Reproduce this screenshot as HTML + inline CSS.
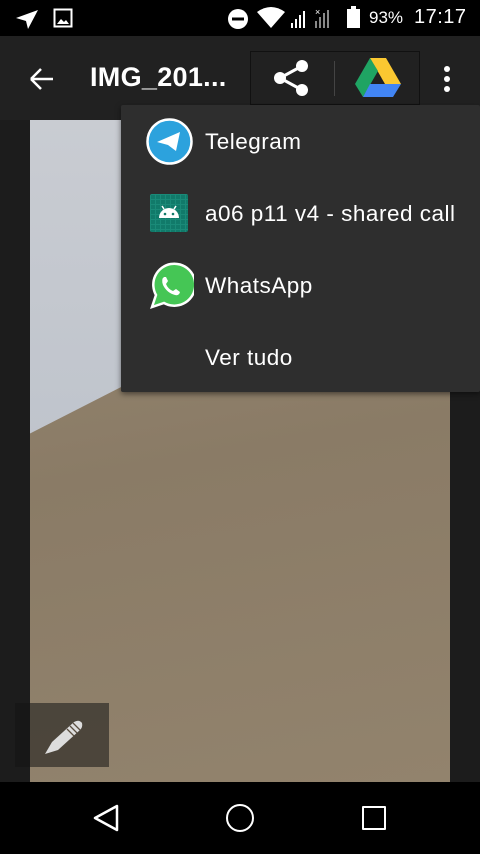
<!DOCTYPE html><html><head><style>
body{margin:0;width:480px;height:854px;overflow:hidden;background:#1c1c1c;font-family:"Liberation Sans",Roboto,sans-serif;position:relative}
.a{position:absolute}
.mi{position:absolute;left:205px;color:#fff;font-size:22.5px;letter-spacing:0.5px}
</style></head><body>
<div class="a" style="left:0;top:0;width:480px;height:36px;background:#000"></div>
<svg class="a" style="left:14px;top:8px" width="26" height="22"><path d="M2 10 L24 2 L14 21 L12 13 Z" fill="#fff"/></svg>
<svg class="a" style="left:53px;top:8px" width="20" height="20"><rect x="1.5" y="1.5" width="17" height="17" fill="none" stroke="#fff" stroke-width="2"/><path d="M4 16 L8 11 L11 14 L13 12 L16 16Z" fill="#fff"/></svg>
<svg class="a" style="left:227px;top:8px" width="22" height="22"><circle cx="11" cy="11" r="10" fill="#fff"/><rect x="5" y="9.5" width="12" height="3" fill="#000"/></svg>
<svg class="a" style="left:256px;top:7px" width="30" height="22"><path d="M1 5 Q15 -5 29 5 L15 21Z" fill="#fff"/></svg>
<svg class="a" style="left:290px;top:7px" width="45" height="22"><g fill="#fff"><rect x="1" y="16" width="2" height="5"/><rect x="5" y="12" width="2" height="9"/><rect x="9" y="8" width="2" height="13"/><rect x="13" y="4" width="2" height="17"/></g><g fill="#888"><rect x="25" y="14" width="2" height="7"/><rect x="29" y="10" width="2" height="11"/><rect x="33" y="6" width="2" height="15"/><rect x="37" y="3" width="2" height="18"/></g><text x="25" y="8" fill="#fff" font-size="9">×</text></svg>
<div class="a" style="left:347px;top:9px;width:13px;height:19px;background:#fff"></div>
<div class="a" style="left:351px;top:6px;width:5px;height:3px;background:#fff"></div>
<div class="a" style="left:369px;top:8px;color:#fff;font-size:17px">93%</div>
<div class="a" style="left:414px;top:6px;color:#fff;font-size:20px;letter-spacing:0.5px">17:17</div>

<div class="a" style="left:0;top:36px;width:480px;height:84px;background:#212121"></div>
<svg class="a" style="left:28px;top:66px" width="28" height="26"><path d="M3 13 H25 M3 13 L13 3 M3 13 L13 23" stroke="#fff" stroke-width="2.5" fill="none"/></svg>
<div class="a" style="left:90px;top:62px;color:#fff;font-size:27px;font-weight:bold;letter-spacing:0.3px">IMG_201...</div>
<div class="a" style="left:250px;top:51px;width:168px;height:52px;border:1px solid #111"></div>
<svg class="a" style="left:270px;top:58px" width="40" height="40"><g fill="#fff"><circle cx="32" cy="8" r="6"/><circle cx="10" cy="20" r="6"/><circle cx="32" cy="32" r="6"/></g><path d="M32 8 L10 20 L32 32" stroke="#fff" stroke-width="3" fill="none"/></svg>
<div class="a" style="left:334px;top:61px;width:1px;height:35px;background:#444"></div>
<svg class="a" style="left:354px;top:57px" width="48" height="42"><path d="M16 1 H32 L47 27 H31Z" fill="#fbc831"/><path d="M16 1 L24 14 L9 40 L1 27Z" fill="#1fa463"/><path d="M9 40 L16 27 H47 L39 40Z" fill="#4285f4"/></svg>
<div class="a" style="left:444px;top:66px;width:6px;height:6px;border-radius:3px;background:#fff;box-shadow:0 10px 0 #fff,0 20px 0 #fff"></div>

<div class="a" style="left:30px;top:120px;width:420px;height:662px;background:linear-gradient(170deg,#9a8b74,#8a7b66 50%,#92836d)"></div>
<div class="a" style="left:30px;top:120px;width:420px;height:330px;background:linear-gradient(180deg,#c9ccd2,#bfc4cc);clip-path:polygon(0 0,100% 0,100% 30%,0 95%)"></div>

<div class="a" style="left:121px;top:105px;width:359px;height:287px;background:#2e2e2e;border-radius:2px;box-shadow:0 2px 6px rgba(0,0,0,.5)"></div>
<svg class="a" style="left:146px;top:118px" width="47" height="47"><circle cx="23.5" cy="23.5" r="22" fill="#2ca2dd" stroke="#fff" stroke-width="2.5"/><path d="M11 24 L34 14 L30 33 L22 27Z" fill="#fff"/></svg>
<div class="mi" style="top:129px">Telegram</div>
<div class="a" style="left:150px;top:194px;width:38px;height:38px;border-radius:2px;background:#117a6a;background-image:linear-gradient(#1a8a78 1px,transparent 1px),linear-gradient(90deg,#1a8a78 1px,transparent 1px);background-size:5px 5px"></div>
<svg class="a" style="left:156px;top:202px" width="26" height="18"><path d="M3 16 A10 10 0 0 1 23 16Z" fill="#fff"/><circle cx="9" cy="12" r="1.3" fill="#117a6a"/><circle cx="17" cy="12" r="1.3" fill="#117a6a"/><path d="M6 4 L8 7 M20 4 L18 7" stroke="#fff" stroke-width="1.5"/></svg>
<div class="mi" style="top:201px">a06 p11 v4 - shared call</div>
<svg class="a" style="left:146px;top:262px" width="48" height="48"><path d="M6 45 L10 33 A21 21 0 1 1 18 41Z" fill="#45c655" stroke="#fff" stroke-width="2.5"/><path d="M18 15 Q15 17 17 23 Q21 31 29 33 Q33 34 34 30 L30 27 L27 29 Q22 27 20 22 L22 19 L20 15Z" fill="#fff"/></svg>
<div class="mi" style="top:273px">WhatsApp</div>
<div class="mi" style="top:345px">Ver tudo</div>

<div class="a" style="left:15px;top:703px;width:94px;height:64px;background:rgba(20,20,20,.55)"></div>
<svg class="a" style="left:42px;top:716px" width="42" height="40"><path d="M3 38 L10 26 L32 6 Q37 3 40 7 Q41 11 38 14 L16 34Z" fill="#ddd"/><path d="M28 10 L35 17 M31 7 L38 14 M25 13 L32 20" stroke="#5a4e40" stroke-width="1.3"/></svg>

<div class="a" style="left:0;top:782px;width:480px;height:72px;background:#000"></div>
<svg class="a" style="left:92px;top:803px" width="30" height="30"><path d="M25 3 V27 L3 15Z" fill="none" stroke="#fff" stroke-width="2.5" stroke-linejoin="round"/></svg>
<div class="a" style="left:226px;top:804px;width:24px;height:24px;border:2.5px solid #fff;border-radius:50%"></div>
<div class="a" style="left:362px;top:806px;width:20px;height:20px;border:2.5px solid #fff;border-radius:1px"></div>
</body></html>
